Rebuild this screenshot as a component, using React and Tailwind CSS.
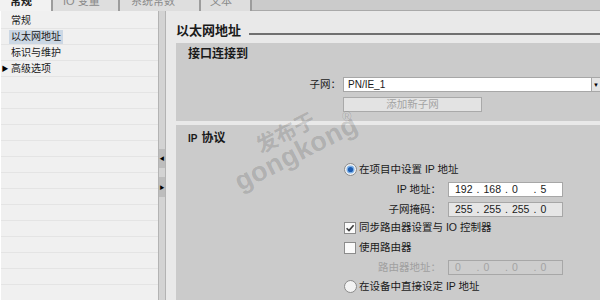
import React from "react";

// ── Small controls ────────────────────────────────────────────────────────────

function Radio({ checked }) {
  return (
    <svg width="13" height="13" viewBox="0 0 13 13" className="shrink-0">
      <circle cx="6.5" cy="6.5" r="6" fill="#f3f3f3" stroke="#8a8a8a" />
      {checked && (
        <>
          <circle cx="6.5" cy="6.5" r="4" fill="#7fb2e8" />
          <circle cx="6.5" cy="6.5" r="2.6" fill="#1d5cb0" />
        </>
      )}
    </svg>
  );
}

function Checkbox({ checked }) {
  return (
    <svg width="12" height="12" viewBox="0 0 12 12" className="shrink-0">
      <rect x="0.5" y="0.5" width="11" height="11" fill="#fafafa" stroke="#8c8c8c" />
      {checked && (
        <path d="M2.6 6.2 L5 8.6 L9.6 3.2" fill="none" stroke="#3c3c3c" strokeWidth="1.6" />
      )}
    </svg>
  );
}

function IpField({ parts, variant }) {
  const look =
    variant === "white"
      ? "bg-white text-[#1a1a1a]"
      : variant === "grey"
      ? "bg-[#e6e6e6] text-[#1a1a1a]"
      : "bg-[#cdcdcd] text-[#a3a3a3]";
  return (
    <div
      className={`flex h-[15px] w-[115px] items-center border border-[#a7a7a7] pl-[6px] text-[10.5px] leading-none ${look}`}
    >
      {parts.map((p, i) => (
        <React.Fragment key={i}>
          <span className="w-[22px]">{p}</span>
          {i < 3 && <span className="w-[7px]">.</span>}
        </React.Fragment>
      ))}
    </div>
  );
}

function FieldRow({ label, dim, children, className }) {
  return (
    <div className={`flex items-center gap-[7px] ${className}`}>
      <span
        className={`w-[253px] text-right text-[10.5px] leading-none ${
          dim ? "text-[#a0a0a0]" : "text-[#1a1a1a]"
        }`}
      >
        {label}
      </span>
      {children}
    </div>
  );
}

const TABS = [
  { label: "常规", w: "w-[53px]", pl: "pl-[10px]", active: true },
  { label: "IO 变量", w: "w-[67px]", pl: "pl-[10px]" },
  { label: "系统常数", w: "w-[81px]", pl: "pl-[11px]" },
  { label: "文本", w: "w-[51px]", pl: "pl-[9px]" },
];

const NAV = [
  { label: "常规" },
  { label: "以太网地址", selected: true },
  { label: "标识与维护" },
  { label: "高级选项", arrow: true },
];

export default function App() {
  const emptyRows = Array.from({ length: 15 });

  return (
    <div className="relative flex h-[300px] w-[600px] flex-col overflow-hidden bg-[#cbcbcb] font-['Liberation_Sans','Noto_Sans_CJK_SC',sans-serif] text-[#1a1a1a]">
      {/* ── Tab strip (cut off at the top, as in the capture) ─────────────── */}
      <div className="flex h-[11px] shrink-0 border-b border-[#a9a9a9]">
        {TABS.map((t) => (
          <div
            key={t.label}
            className={`h-[11px] overflow-hidden border-r-[2px] border-[#9c9c9c] text-[11px] ${t.w} ${t.pl} ${
              t.active
                ? "-mb-px h-[12px] bg-[#f2f2f2] font-bold text-[#222]"
                : "bg-[#dedede] text-[#8a8a8a]"
            }`}
          >
            <span className="-mt-[6px] block leading-[14px]">{t.label}</span>
          </div>
        ))}
      </div>

      <div className="flex min-h-0 flex-1">
        {/* ── Left navigation ─────────────────────────────────────────────── */}
        <div className="w-[158px] shrink-0 border-l border-white bg-[#f0f0f0] pt-[2px]">
          {NAV.map((n) => (
            <div
              key={n.label}
              className="flex h-[16px] items-center border-b border-[#e4e4e4] text-[10px]"
            >
              <span className="flex w-[8px] justify-center">
                {n.arrow && <span className="text-[7px] leading-none text-black">▶</span>}
              </span>
              <span
                className={`px-[2px] leading-[14px] ${n.selected ? "bg-[#cbd7e4]" : ""}`}
              >
                {n.label}
              </span>
            </div>
          ))}
          {emptyRows.map((_, i) => (
            <div key={i} className="h-[16px] border-b border-[#e4e4e4]" />
          ))}
        </div>

        {/* ── Splitter ────────────────────────────────────────────────────── */}
        <div className="flex w-[8px] shrink-0 flex-col border-x border-[#b3b3b3] bg-[#d3d3d3]">
          <div className="mt-[138px] flex h-[19px] items-center justify-center bg-[#bdbdbd]">
            <span className="text-[5px] leading-none text-black">◀</span>
          </div>
          <div className="mt-[9px] flex h-[20px] items-center justify-center bg-[#bdbdbd]">
            <span className="text-[5px] leading-none text-black">▶</span>
          </div>
        </div>

        {/* ── Content ─────────────────────────────────────────────────────── */}
        <div className="flex min-w-0 flex-1 flex-col bg-[#e9e9e9] pl-[10px]">
          {/* Header */}
          <div className="flex h-[32px] shrink-0 items-start">
            <h2 className="mt-[13px] text-[13px] font-bold leading-[13px]">以太网地址</h2>
            <div className="ml-[8px] mt-[22px] h-[2px] flex-1 bg-[#707070]" />
          </div>

          {/* Interface connected to */}
          <section className="h-[78px] shrink-0 bg-[#cbcbcb] pl-[12px] pt-[4px]">
            <h3 className="text-[12px] font-bold leading-[14px]">接口连接到</h3>
            <div className="mt-[16px] flex items-center gap-[2px]">
              <span className="w-[153px] shrink-0 text-right text-[10.5px] leading-none">子网：</span>
              <div className="flex h-[15px] w-[249px] shrink-0 items-center border border-[#a7a7a7] bg-white pl-[4px] text-[10px] leading-none">
                PN/IE_1
              </div>
              <div className="-ml-[2px] flex h-[15px] flex-1 items-center justify-center border-y border-[#a7a7a7] bg-[#e4e4e4]">
                <span className="text-[6px] leading-none text-black">▼</span>
              </div>
            </div>
            <button
              type="button"
              className="ml-[155px] mt-[5px] flex h-[15px] w-[139px] items-center justify-center border border-[#a9a9a9] bg-[#e3e3e3] text-[10.5px] leading-none text-[#a3a3a3]"
            >
              添加新子网
            </button>
          </section>

          <div className="h-[4px] shrink-0" />

          {/* IP protocol */}
          <section className="flex-1 bg-[#cbcbcb] pl-[12px] pt-[6px]">
            <h3 className="flex items-baseline gap-[4px] text-[12px] font-bold leading-[14px]">
              <span className="text-[10px]">IP</span>
              <span>协议</span>
            </h3>

            <div className="ml-[156px] mt-[16px] flex h-[14px] items-center gap-[2px] text-[10.5px] leading-none">
              <Radio checked />
              <span>在项目中设置 IP 地址</span>
            </div>

            <FieldRow label="IP 地址：" className="mt-[6px]">
              <IpField parts={["192", "168", "0", "5"]} variant="white" />
            </FieldRow>
            <FieldRow label="子网掩码：" className="mt-[5px]">
              <IpField parts={["255", "255", "255", "0"]} variant="grey" />
            </FieldRow>

            <div className="ml-[156px] mt-[4px] flex h-[13px] items-center gap-[3px] text-[10.5px] leading-none">
              <Checkbox checked />
              <span>同步路由器设置与 IO 控制器</span>
            </div>
            <div className="ml-[156px] mt-[7px] flex h-[13px] items-center gap-[3px] text-[10.5px] leading-none">
              <Checkbox />
              <span>使用路由器</span>
            </div>

            <FieldRow label="路由器地址：" dim className="mt-[6px]">
              <IpField parts={["0", "0", "0", "0"]} variant="off" />
            </FieldRow>

            <div className="ml-[156px] mt-[5px] flex h-[13px] items-center gap-[2px] text-[10.5px] leading-none">
              <Radio />
              <span>在设备中直接设定 IP 地址</span>
            </div>
          </section>
        </div>
      </div>

      {/* ── Watermark ─────────────────────────────────────────────────────── */}
      <div className="pointer-events-none absolute left-[216px] top-[121px] flex w-[150px] rotate-[-27deg] flex-col items-center font-bold text-black/15">
        <span className="text-[21px] leading-[22px]">发布于</span>
        <span className="text-[27px] leading-[22px] tracking-[0.5px]">gongkong</span>
      </div>
      <span className="pointer-events-none absolute left-[342px] top-[110px] text-[13px] leading-none text-black/15">
        ®
      </span>
    </div>
  );
}
